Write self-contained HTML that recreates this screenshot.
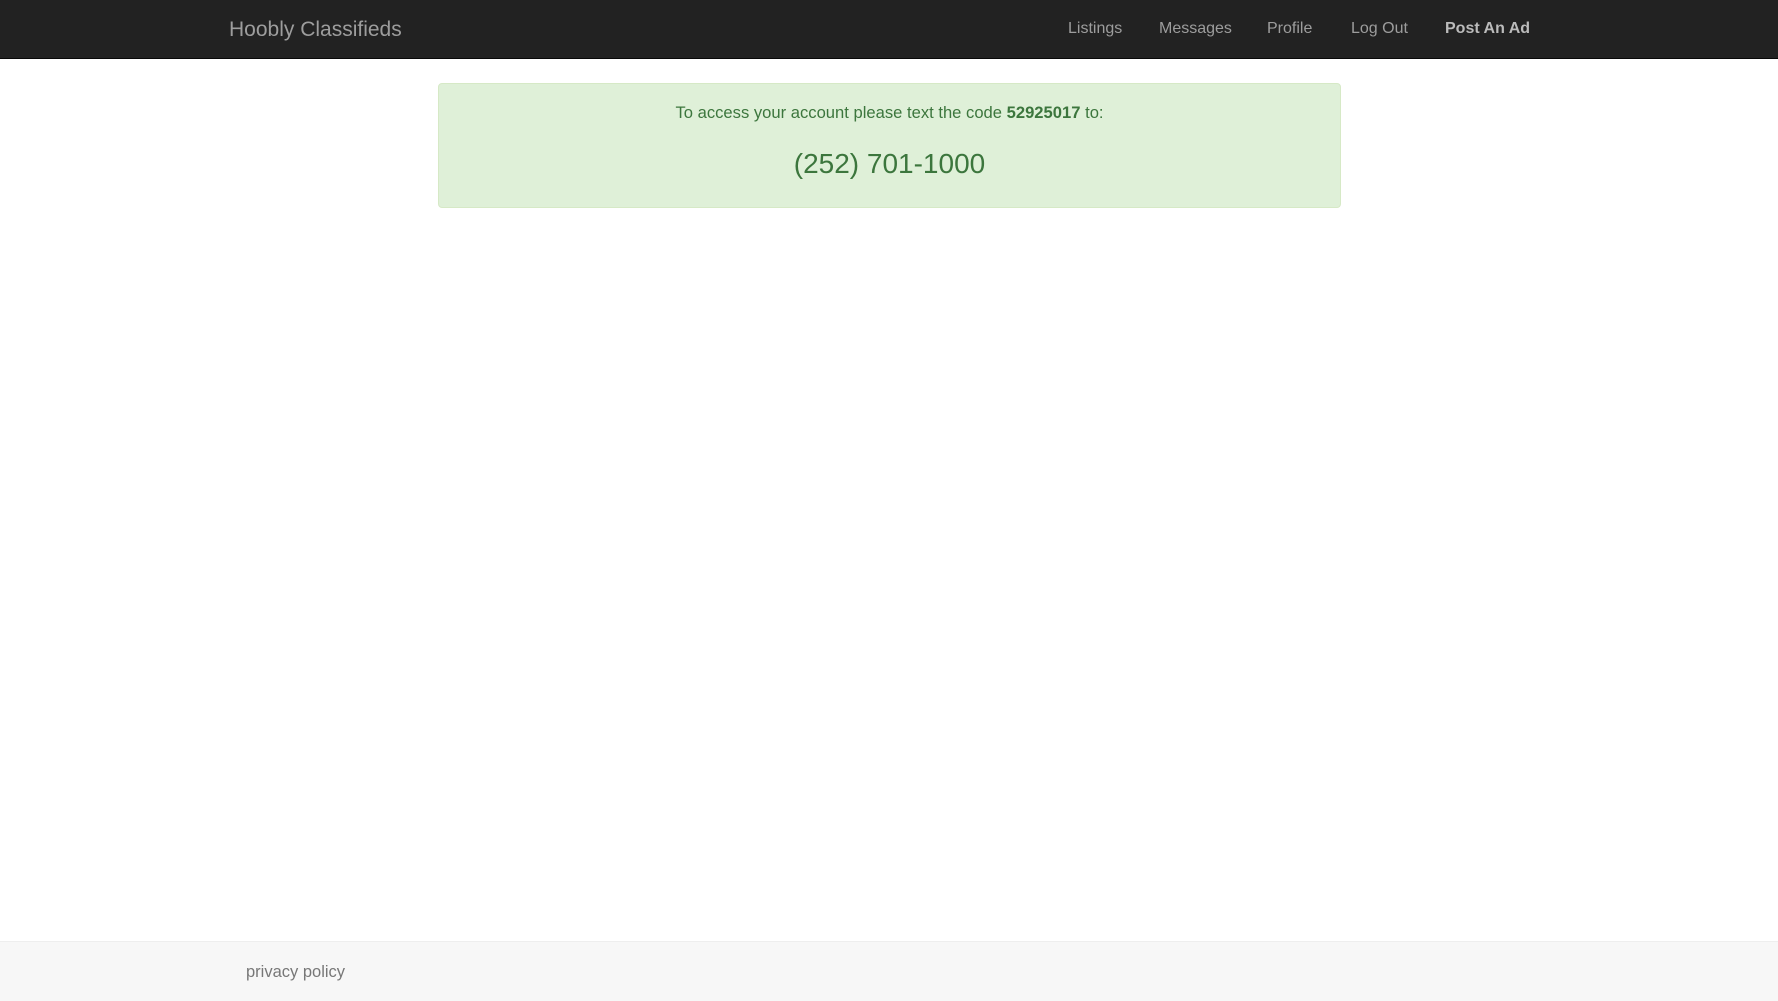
<!DOCTYPE html>
<html><head><style>
html,body{margin:0;padding:0;width:1778px;height:1000px;overflow:hidden;background:#fff;font-family:"Liberation Sans",sans-serif;}
.nav{position:absolute;left:0;top:0;width:1778px;height:58px;background:#222;border-bottom:1px solid #080808;}
.nav span{position:absolute;top:19px;font-size:16px;color:#9d9d9d;white-space:nowrap;line-height:20px;}
.brand{left:229px;top:17px!important;font-size:21px!important;line-height:26px!important;}
.alert{position:absolute;left:438px;top:83px;width:901px;height:123px;background:#dff0d8;border:1px solid #d6e9c6;border-radius:4px;color:#3c763d;text-align:center;}
.l1{position:absolute;top:19px;width:100%;font-size:16.6px;line-height:20px;}
.l2{position:absolute;top:63px;width:100%;font-size:28px;line-height:34px;}
.foot{position:absolute;left:0;top:941px;width:1778px;height:59px;background:#f7f7f7;border-top:1px solid #eee;}
.foot span{position:absolute;left:246px;top:21px;font-size:16.5px;color:#777;}
</style></head><body>
<div class="nav">
<span class="brand">Hoobly Classifieds</span>
<span style="left:1068px">Listings</span>
<span style="left:1159px">Messages</span>
<span style="left:1267px">Profile</span>
<span style="left:1351px">Log Out</span>
<span style="left:1445px;font-weight:bold;color:#bbb">Post An Ad</span>
</div>
<div class="alert">
<div class="l1">To access your account please text the code <b>52925017</b> to:</div>
<div class="l2">(252) 701-1000</div>
</div>
<div class="foot"><span>privacy policy</span></div>
</body></html>
